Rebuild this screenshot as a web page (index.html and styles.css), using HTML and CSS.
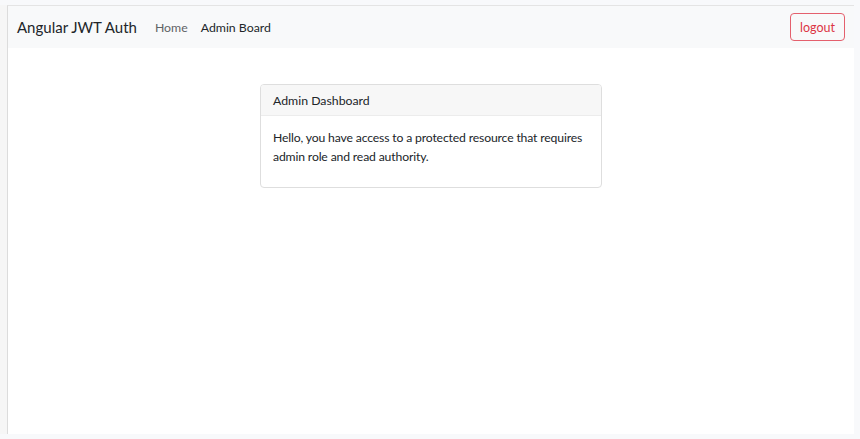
FILE: index.html
```html
<!DOCTYPE html>
<html lang="en">
<head>
<meta charset="utf-8">
<title>Angular JWT Auth</title>
<link rel="stylesheet" href="styles.css">
</head>
<body>
<div class="frame">
  <div class="app">
    <nav class="navbar">
      <a class="brand" href="#">Angular JWT Auth</a>
      <ul class="nav-links">
        <li><a class="nav-link" href="#">Home</a></li>
        <li><a class="nav-link active" href="#">Admin Board</a></li>
      </ul>
      <button class="btn-logout" type="button">logout</button>
    </nav>
    <main class="content">
      <div class="card">
        <div class="card-header">Admin Dashboard</div>
        <div class="card-body">
          <p>Hello, you have access to a protected resource that requires admin role and read authority.</p>
        </div>
      </div>
    </main>
  </div>
</div>
</body>
</html>
```
FILE: styles.css
```css
html, body {
  margin: 0;
  padding: 0;
  height: 100%;
}
body {
  background: #f8f9fb;
  font-family: "Lato", "Open Sans", sans-serif;
  color: #212529;
}
.frame {
  height: 100%;
  box-sizing: border-box;
  padding: 5px 6px 5px 0;
  background: #f8f9fb;
}
.app {
  height: 100%;
  box-sizing: border-box;
  margin-left: 7px;
  border-top: 1px solid #e4e4e4;
  border-left: 1px solid #dcdcdc;
  background: #fff;
  display: flex;
  flex-direction: column;
  box-shadow: -7px 0 0 #f6f6f6;
}
.navbar {
  height: 42px;
  flex: none;
  background: #f8f9fa;
  display: flex;
  align-items: center;
  padding: 0 9px 0 9px;
}
.brand {
  font-size: 15px;
  color: #212529;
  text-decoration: none;
  margin-right: 18px;
}
.nav-links {
  list-style: none;
  margin: 0;
  padding: 0 0 3px;
  display: flex;
  gap: 13px;
}
.nav-link {
  font-size: 12.3px;
  color: #5f6366;
  text-decoration: none;
}
.nav-link.active {
  color: #212529;
}
.btn-logout {
  margin-left: auto;
  height: 28px;
  width: 55px;
  padding: 0;
  border: 1px solid #e4606d;
  border-radius: 4px;
  background: transparent;
  color: #dc3545;
  font-family: inherit;
  font-size: 12.5px;
}
.content {
  flex: 1;
  display: flex;
  justify-content: center;
  padding-top: 36px;
}
.card {
  width: 342px;
  align-self: flex-start;
  box-sizing: border-box;
  border: 1px solid #dedede;
  border-radius: 4px;
  overflow: hidden;
}
.card-header {
  height: 31px;
  box-sizing: border-box;
  padding: 0 12px;
  display: flex;
  align-items: center;
  background: #f7f7f7;
  border-bottom: 1px solid #ececec;
  font-size: 12.3px;
}
.card-body {
  padding: 12px 8px 21px 12px;
}
.card-body p {
  margin: 0;
  font-size: 12.2px;
  letter-spacing: -0.15px;
  line-height: 19px;
}
```
